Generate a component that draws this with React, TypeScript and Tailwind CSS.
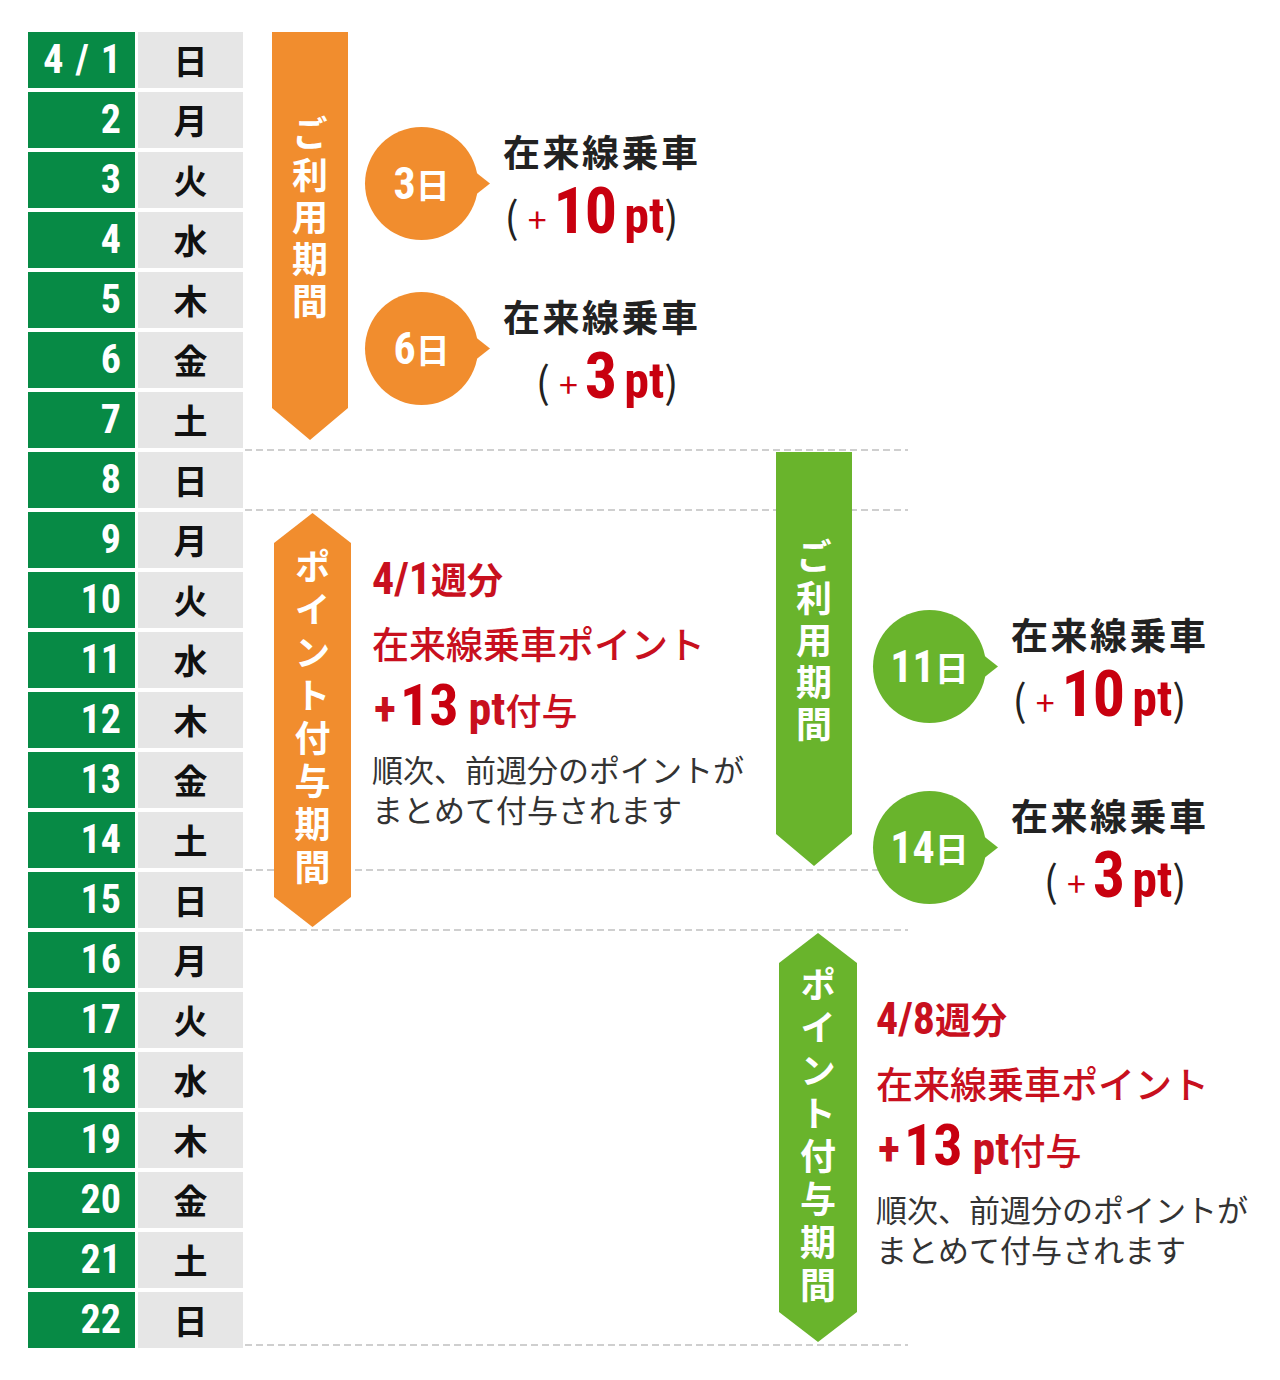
const days: [string, string][] = [
  ["4/1", "日"], ["2", "月"], ["3", "火"], ["4", "水"], ["5", "木"], ["6", "金"], ["7", "土"],
  ["8", "日"], ["9", "月"], ["10", "火"], ["11", "水"], ["12", "木"], ["13", "金"], ["14", "土"],
  ["15", "日"], ["16", "月"], ["17", "火"], ["18", "水"], ["19", "木"], ["20", "金"], ["21", "土"], ["22", "日"],
];

const NUM = "[font-family:'Roboto_Condensed','DejaVu_Sans_Condensed','Liberation_Sans',sans-serif] font-bold";
const CJK = "[font-family:'Noto_Sans_CJK_JP',sans-serif]";
const DASH = "h-[2px] bg-[repeating-linear-gradient(90deg,#cfcfcf_0_7px,transparent_7px_11px)]";
const RED = "text-[#c8000f]";

function Bubble({ bg, n }: { bg: string; n: string }) {
  return (
    <div className="flex items-center shrink-0">
      <div className={`w-[113px] h-[113px] rounded-full flex items-center justify-center text-white ${bg}`}>
        <span className={`${NUM} text-[44px] leading-none`}>{n}</span>
        <span className={`${CJK} font-bold text-[34px] leading-none`}>日</span>
      </div>
      <div className={`w-[14px] h-[22px] -ml-[2px] [clip-path:polygon(0_0,100%_50%,0_100%)] ${bg}`} />
    </div>
  );
}

function Ride({ bg, n, pt }: { bg: string; n: string; pt: string }) {
  return (
    <div className="flex items-center gap-[13px]">
      <Bubble bg={bg} n={n} />
      <div className="flex flex-col">
        <div className={`${CJK} font-bold text-[37px] leading-[46px] tracking-[2.5px] text-[#222]`}>在来線乗車</div>
        <div className="self-end mr-[22px] mt-[6px] h-[60px] flex items-baseline">
          <span className={`${CJK} text-[42px] leading-none text-[#222]`}>(</span>
          <span className={`${CJK} text-[34px] leading-none ${RED} ml-[9px] mr-[7px]`}>+</span>
          <span className={`${NUM} text-[64px] leading-none tracking-[-1px] ${RED}`}>{pt}</span>
          <span className={`${NUM} text-[50px] leading-none ml-[8px] ${RED}`}>pt</span>
          <span className={`${CJK} text-[42px] leading-none text-[#222]`}>)</span>
        </div>
      </div>
    </div>
  );
}

function Grant({ week }: { week: string }) {
  return (
    <div className="flex flex-col text-[#c8101e]">
      <div className="flex items-baseline leading-[44px]">
        <span className={`${NUM} text-[44px]`}>{week}</span>
        <span className={`${CJK} font-bold text-[36px]`}>週分</span>
      </div>
      <div className={`${CJK} font-medium text-[37px] leading-[44px] mt-[20px]`}>在来線乗車ポイント</div>
      <div className="flex items-baseline h-[60px] mt-[11px]">
        <span className={`${NUM} text-[46px] leading-none ml-[2px] mr-[4px]`}>+</span>
        <span className={`${NUM} text-[58px] leading-none ${RED}`}>13</span>
        <span className={`${NUM} text-[46px] leading-none ml-[10px]`}>pt</span>
        <span className={`${CJK} font-medium text-[36px] leading-none`}>付与</span>
      </div>
      <div className={`${CJK} text-[31px] leading-[40px] text-[#333] mt-[13px]`}>
        <div>順次、前週分のポイントが</div>
        <div>まとめて付与されます</div>
      </div>
    </div>
  );
}

function Vtext({ text, wide }: { text: string; wide?: boolean }) {
  return (
    <span
      className={`${CJK} font-bold text-white text-[36px] leading-none [writing-mode:vertical-rl] ${
        wide ? "tracking-[7px]" : "tracking-[6px]"
      }`}
    >
      {text}
    </span>
  );
}

function DayNum({ d }: { d: string }) {
  if (d.includes("/")) {
    const [m, day] = d.split("/");
    return (
      <span className={`${NUM} text-[40px] leading-none`}>
        {m}
        <span className="mx-[12px]">/</span>
        {day}
      </span>
    );
  }
  return <span className={`${NUM} text-[40px] leading-none`}>{d}</span>;
}

export default function App() {
  return (
    <div className={`w-[1280px] h-[1380px] bg-white pt-[30px] pl-[28px] ${CJK}`}>
      <div className="grid grid-cols-[110px_105px_29px_78px_426px_82px_50px_1fr] grid-rows-[repeat(22,60px)]">
        {/* Calendar */}
        <div className="col-start-1 col-end-3 row-start-1 row-end-23 grid grid-cols-[110px_105px] grid-rows-[repeat(22,60px)]">
          {days.map(([d, w]) => (
            <div key={d} className="contents">
              <div className="my-[2px] mr-[3px] bg-[#078a45] flex items-center justify-end pr-[14px] text-white">
                <DayNum d={d} />
              </div>
              <div className="my-[2px] bg-[#e6e6e6] flex items-center justify-center">
                <span className={`${CJK} font-bold text-[34px] leading-none text-[#111]`}>{w}</span>
              </div>
            </div>
          ))}
        </div>

        {/* Dashed week lines */}
        <div className={`col-start-3 col-end-8 row-start-8 self-start ml-[2px] -mt-[1px] ${DASH}`} />
        <div className={`col-start-3 col-end-8 row-start-9 self-start ml-[2px] -mt-[1px] ${DASH}`} />
        <div className={`col-start-3 col-end-8 row-start-15 self-start ml-[2px] -mt-[1px] ${DASH}`} />
        <div className={`col-start-3 col-end-8 row-start-16 self-start ml-[2px] -mt-[1px] ${DASH}`} />
        <div className={`col-start-3 col-end-8 row-start-22 self-end ml-[2px] mb-[4px] ${DASH}`} />

        {/* Week of 4/1 */}
        <div className="col-start-4 row-start-1 row-end-8 mt-[2px] mb-[10px] w-[76px] bg-[#f18d2e] flex items-center justify-center pb-[32px] [clip-path:polygon(0_0,100%_0,100%_calc(100%_-_32px),50%_100%,0_calc(100%_-_32px))]">
          <Vtext text="ご利用期間" />
        </div>
        <div className="col-start-5 row-start-1 row-end-8 flex flex-col pt-[97px] pl-[15px] gap-[52px]">
          <Ride bg="bg-[#f18d2e]" n="3" pt="10" />
          <Ride bg="bg-[#f18d2e]" n="6" pt="3" />
        </div>
        <div className="col-start-4 row-start-9 row-end-16 mt-[3px] mb-[3px] ml-[2px] w-[77px] bg-[#f18d2e] flex items-center justify-center [clip-path:polygon(50%_0,100%_30px,100%_calc(100%_-_30px),50%_100%,0_calc(100%_-_30px),0_30px)]">
          <Vtext text="ポイント付与期間" wide />
        </div>
        <div className="col-start-5 row-start-9 row-end-16 pt-[46px] pl-[22px]">
          <Grant week="4/1" />
        </div>

        {/* Week of 4/8 */}
        <div className="col-start-6 row-start-8 row-end-15 mt-[2px] mb-[4px] w-[76px] bg-[#69b42c] flex items-center justify-center pb-[32px] [clip-path:polygon(0_0,100%_0,100%_calc(100%_-_32px),50%_100%,0_calc(100%_-_32px))]">
          <Vtext text="ご利用期間" />
        </div>
        <div className="col-start-7 col-end-9 row-start-8 row-end-17 flex flex-col pt-[160px] pl-[15px] gap-[68px]">
          <Ride bg="bg-[#69b42c]" n="11" pt="10" />
          <Ride bg="bg-[#69b42c]" n="14" pt="3" />
        </div>
        <div className="col-start-6 row-start-16 row-end-23 mt-[3px] mb-[8px] ml-[3px] w-[78px] bg-[#69b42c] flex items-center justify-center [clip-path:polygon(50%_0,100%_30px,100%_calc(100%_-_30px),50%_100%,0_calc(100%_-_30px),0_30px)]">
          <Vtext text="ポイント付与期間" wide />
        </div>
        <div className="col-start-7 col-end-9 row-start-16 row-end-23 pt-[66px] pl-[18px]">
          <Grant week="4/8" />
        </div>
      </div>
    </div>
  );
}
